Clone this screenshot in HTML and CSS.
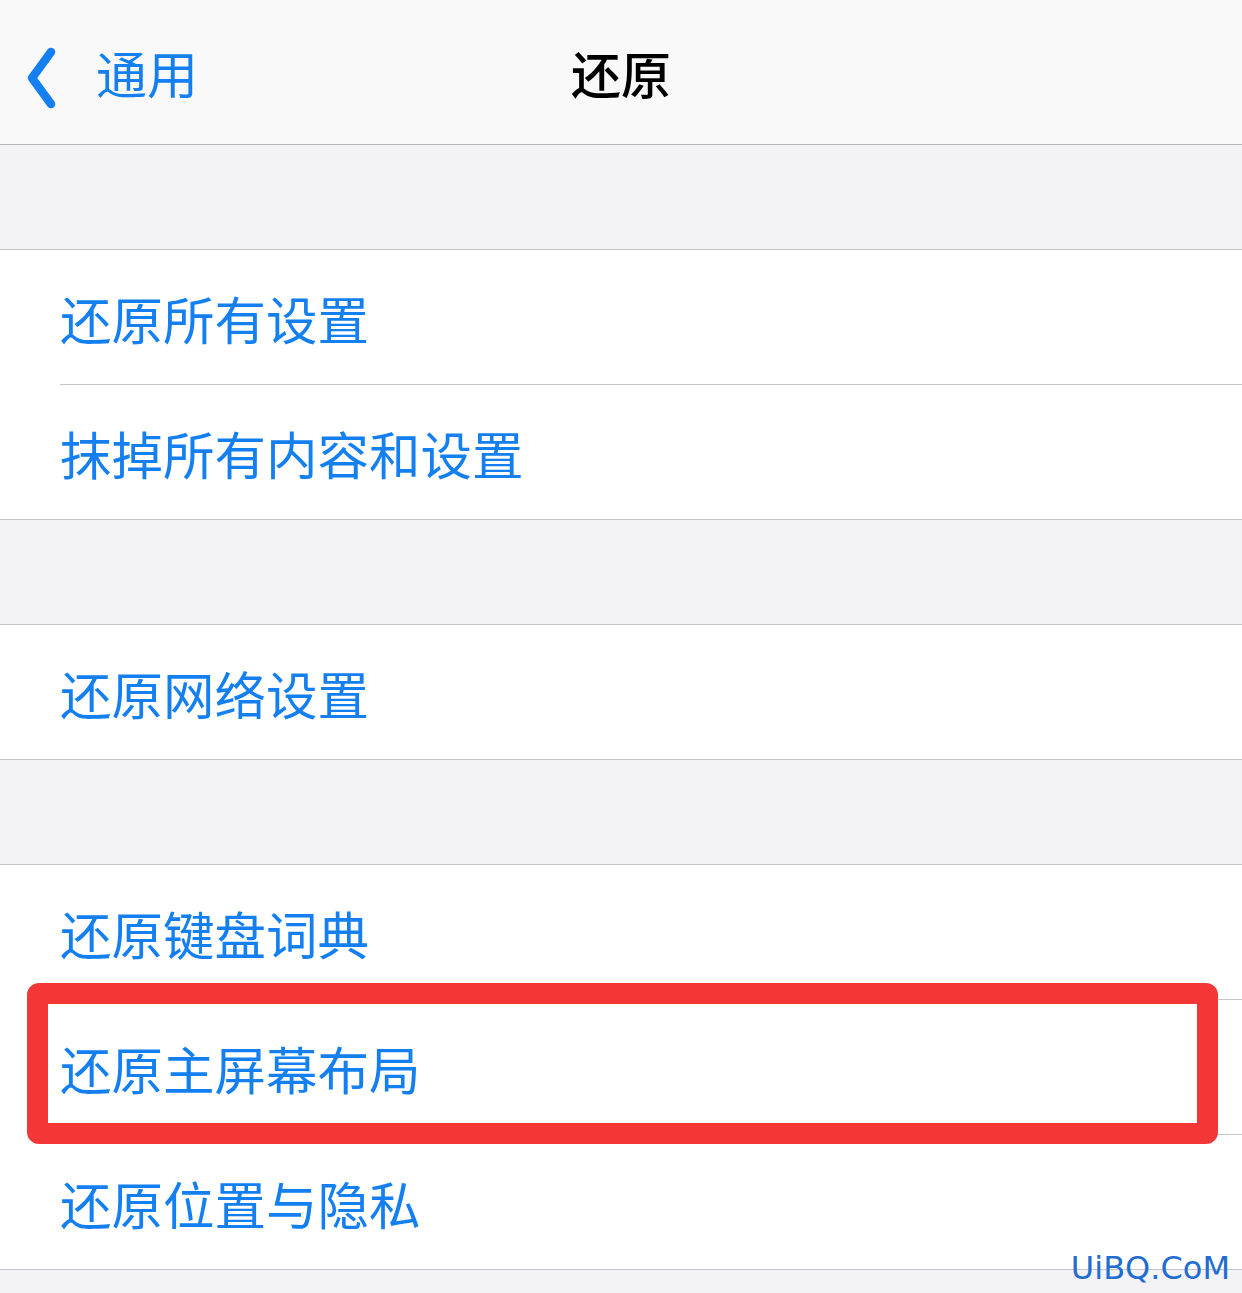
FILE: index.html
```html
<!DOCTYPE html>
<html lang="zh-CN">
  <head>
    <meta charset="utf-8">
    <title>还原</title>
    <link rel="stylesheet" href="styles.css">
  </head>
  <body>
    <header class="nav-bar">
      <a class="back-link" href="#">
        <svg class="chevron" width="36" height="64" viewBox="0 0 36 64">
          <polyline points="27,6 8,32 27,58" />
        </svg>
        <span>通用</span>
      </a>
      <h1 class="nav-title">还原</h1>
      <div></div>
    </header>

    <section class="group">
      <div class="row">还原所有设置</div>
      <div class="row">抹掉所有内容和设置</div>
    </section>

    <section class="group">
      <div class="row">还原网络设置</div>
    </section>

    <section class="group">
      <div class="row">还原键盘词典</div>
      <div class="row highlighted">
        还原主屏幕布局
        <span class="red-frame"></span>
      </div>
      <div class="row">还原位置与隐私</div>
    </section>

    <div class="watermark">UiBQ.CoM</div>
  </body>
</html>
```

FILE: styles.css
```css
body {
  position: relative;
  margin: 0;
  min-height: 1293px;
  background-color: #f2f2f7;
  font-family: "Noto Sans CJK SC", sans-serif;
}

.nav-bar {
  display: grid;
  grid-template-columns: 1fr auto 1fr;
  align-items: center;
  height: 144px;
  padding-left: 24px;
  background-color: #f9f9fa;
  border-bottom: 1px solid #b4b4b8;
}

.back-link {
  display: flex;
  align-items: center;
  gap: 36px;
  color: #147ff0;
  font-size: 51px;
  text-decoration: none;
  line-height: 1;
}

.chevron {
  margin-top: 12px;
}

.chevron polyline {
  fill: none;
  stroke: #147ff0;
  stroke-width: 8.5;
  stroke-linecap: round;
  stroke-linejoin: round;
}

.nav-title {
  margin: 0;
  margin-left: -24px;
  font-size: 50px;
  font-weight: 500;
  color: #000;
}

.group {
  margin-top: 104px;
  background-color: #fff;
  border-top: 1px solid #c6c6c8;
  border-bottom: 1px solid #c6c6c8;
}

.row {
  position: relative;
  display: flex;
  align-items: center;
  height: 134px;
  padding-left: 60px;
  padding-top: 2px;
  box-sizing: border-box;
  color: #147ff0;
  font-size: 51.5px;
  line-height: 1;
}

/* inset separator between rows */
.row + .row::before {
  content: "";
  position: absolute;
  top: -1px;
  left: 60px;
  right: 0;
  border-top: 1px solid #c6c6c8;
}

.row + .row {
  margin-top: 1px;
}

.red-frame {
  position: absolute;
  top: -17px;
  left: 27px;
  right: 24px;
  bottom: -10px;
  border: 21px solid #f43636;
  border-radius: 12px;
  z-index: 1;
}

.watermark {
  position: absolute;
  top: 1249px;
  right: 12px;
  color: #1f6dd0;
  font-family: "DejaVu Sans", sans-serif;
  font-size: 32px;
}
```
